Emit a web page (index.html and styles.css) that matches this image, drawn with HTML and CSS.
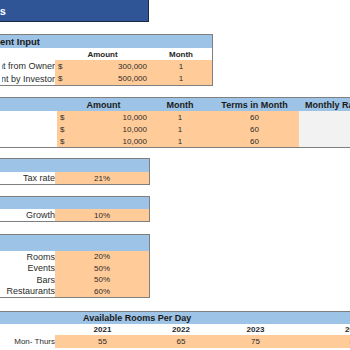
FILE: index.html
```html
<!DOCTYPE html>
<html>
<head>
<meta charset="utf-8">
<link rel="stylesheet" href="styles.css">
</head>
<body>
<div class="sheet">
  <div class="title"><span class="clip title-text">Assumptions</span></div>

  <section class="block b1">
    <div class="hdr"><span class="clip hdr-clip">Investment Input</span></div>
    <div class="grid g1">
      <div class="cell sub"></div>
      <div class="cell sub bold center">Amount</div>
      <div class="cell sub bold center">Month</div>

      <div class="cell label"><span class="clip lbl">Investment from Owner</span></div>
      <div class="cell inp money"><span>$</span><span>300,000</span></div>
      <div class="cell inp center">1</div>

      <div class="cell label tall"><span class="clip lbl">Investment by Investor</span></div>
      <div class="cell inp money tall"><span>$</span><span>500,000</span></div>
      <div class="cell inp center tall">1</div>
    </div>
  </section>

  <section class="block b2">
    <div class="grid g2">
      <div class="cell hdr2"></div>
      <div class="cell hdr2 bold center">Amount</div>
      <div class="cell hdr2 bold center">Month</div>
      <div class="cell hdr2 bold center">Terms in Month</div>
      <div class="cell hdr2 bold start">Monthly Rate</div>

      <div class="cell"></div>
      <div class="cell inp money"><span>$</span><span>10,000</span></div>
      <div class="cell inp center">1</div>
      <div class="cell inp center">60</div>
      <div class="cell grey"></div>

      <div class="cell"></div>
      <div class="cell inp money"><span>$</span><span>10,000</span></div>
      <div class="cell inp center">1</div>
      <div class="cell inp center">60</div>
      <div class="cell grey"></div>

      <div class="cell"></div>
      <div class="cell inp money"><span>$</span><span>10,000</span></div>
      <div class="cell inp center">1</div>
      <div class="cell inp center">60</div>
      <div class="cell grey"></div>
    </div>
  </section>

  <section class="block small b3">
    <div class="hdr"></div>
    <div class="grid g3">
      <div class="cell label"><span class="clip lbl">Tax rate</span></div>
      <div class="cell inp center">21%</div>
    </div>
  </section>

  <section class="block small b4">
    <div class="hdr h12"></div>
    <div class="grid g3">
      <div class="cell label"><span class="clip lbl">Growth</span></div>
      <div class="cell inp center">10%</div>
    </div>
  </section>

  <section class="block small b5">
    <div class="hdr h16"></div>
    <div class="grid g5">
      <div class="cell label"><span class="clip lbl">Rooms</span></div>
      <div class="cell inp center">20%</div>
      <div class="cell label"><span class="clip lbl">Events</span></div>
      <div class="cell inp center">50%</div>
      <div class="cell label"><span class="clip lbl">Bars</span></div>
      <div class="cell inp center">50%</div>
      <div class="cell label"><span class="clip lbl">Restaurants</span></div>
      <div class="cell inp center">60%</div>
    </div>
  </section>

  <section class="block b6">
    <div class="hdr h12 hdr6">Available Rooms Per Day</div>
    <div class="grid g6">
      <div class="cell sub"></div>
      <div class="cell sub bold center">2021</div>
      <div class="cell sub bold center">2022</div>
      <div class="cell sub bold center">2023</div>
      <div class="cell sub bold center">2024</div>

      <div class="cell label"><span class="clip lbl lbl-sm">Mon- Thurs</span></div>
      <div class="cell inp center">55</div>
      <div class="cell inp center">65</div>
      <div class="cell inp center">75</div>
      <div class="cell inp center">85</div>
    </div>
  </section>
</div>
</body>
</html>
```

FILE: styles.css
```css
html, body {
  margin: 0;
  padding: 0;
  overflow: hidden;
  background: #ffffff;
}

body {
  width: 350px;
  height: 350px;
  font-family: "Liberation Sans", Arial, sans-serif;
  font-size: 8px;
  color: #262626;
}

.sheet {
  display: flex;
  flex-direction: column;
  width: 350px;
}

.title {
  box-sizing: border-box;
  width: 149px;
  height: 22px;
  background: #2f5597;
  border-right: 1px solid #1b2846;
  border-bottom: 1px solid #1b2846;
  display: flex;
  align-items: center;
}

.clip {
  display: flex;
  justify-content: flex-end;
  overflow: hidden;
  white-space: nowrap;
}

.title-text {
  width: 6px;
  color: #ffffff;
  font-weight: bold;
  font-size: 11px;
}

.block {
  box-sizing: border-box;
  border-top: 1px solid #7f7f7f;
  border-bottom: 1px solid #7f7f7f;
  border-right: 1px solid #7f7f7f;
}

.b1 { width: 213px; margin-top: 12px; }
.b2 { width: 350px; margin-top: 11px; border-right: none; }
.small { width: 150px; }
.b3 { margin-top: 10px; }
.b4 { margin-top: 11px; }
.b5 { margin-top: 12px; }
.b6 { width: 350px; margin-top: 13px; border-right: none; border-bottom: none; }

.hdr {
  height: 13px;
  background: #9dc3e6;
  display: flex;
  align-items: center;
  font-weight: bold;
  font-size: 9px;
  color: #1a1a1a;
}

.h12 { height: 12px; }
.h16 { height: 16px; }

.hdr-clip { width: 40px; font-size: 9.5px; }

.hdr6 {
  padding-left: 83px;
  overflow: hidden;
  white-space: nowrap;
}

.grid {
  display: grid;
}

.g1 {
  grid-template-columns: 55px 95px 62px;
  grid-template-rows: 12px 12px 13px;
}

.g2 {
  grid-template-columns: 57px 93px 60px 89px 110px;
  grid-template-rows: 13px 12px 12px 12px;
}

.g3 {
  grid-template-columns: 55px 94px;
  grid-template-rows: 12px;
}

.g5 {
  grid-template-columns: 55px 94px;
  grid-template-rows: 11.5px 11.5px 11.5px 11.5px;
}

.g6 {
  grid-template-columns: 55px 95px 62px 87px 110px;
  grid-template-rows: 11px 13px 3px;
}

.cell {
  display: flex;
  align-items: center;
  white-space: nowrap;
  overflow: hidden;
}

.sub { background: #ffffff; }

.hdr2 {
  background: #9dc3e6;
  font-size: 9px;
  color: #1a1a1a;
}

.bold { font-weight: bold; }

.center { justify-content: center; }

.start { justify-content: flex-start; padding-left: 6px; }

.label { justify-content: flex-end; }

.lbl {
  width: 53px;
  font-size: 9px;
  color: #2b2b2b;
}

.lbl-sm { font-size: 8px; }

.inp {
  background: #ffcc99;
  color: #2b2b2b;
}

.money {
  justify-content: space-between;
  padding: 0 3px 0 3px;
}

.grey { background: #f2f2f2; }
```
